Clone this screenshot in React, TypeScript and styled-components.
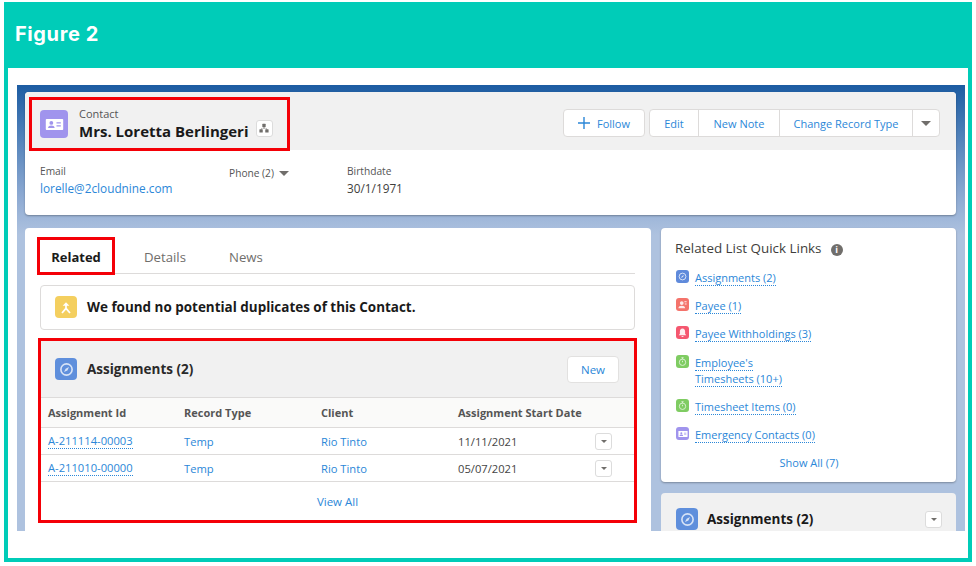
import React from "react";
import styled, { createGlobalStyle } from "styled-components";

const GlobalStyle = createGlobalStyle`
  html, body {
    margin: 0;
    padding: 0;
    background: #fff;
  }
  * {
    box-sizing: border-box;
  }
`;

const BLUE = "#2b87d8";
const RED = "#f40007";

const Page = styled.div`
  width: 976px;
  height: 566px;
  padding: 2px 4px 4px;
  background: #fff;
  font-family: "Open Sans", "Noto Sans", sans-serif;
  overflow: hidden;
`;

const Frame = styled.div`
  width: 968px;
  height: 560px;
  border: 4px solid #00ccb8;
  display: flex;
  flex-direction: column;
`;

const Banner = styled.div`
  height: 62px;
  flex: none;
  background: #00ccb8;
  color: #fff;
  font: 700 20px "Inter", sans-serif;
  letter-spacing: 0.6px;
  padding-left: 7px;
  display: flex;
  align-items: center;
  padding-bottom: 6px;
`;

const Screen = styled.div`
  margin: 17px 3px 0 9px;
  height: 446px;
  padding: 7px 9px 0 8px;
  background: linear-gradient(180deg, #1c5ca2 0, #4f80b9 50px, #8ca9d2 110px, #aec2df 150px);
  overflow: hidden;
`;

const RecordCard = styled.div`
  width: 931px;
  height: 123px;
  background: #fff;
  border-radius: 4px;
  box-shadow: 0 1px 2px rgba(0, 0, 0, 0.3);
`;

const RecordHead = styled.div`
  height: 58px;
  background: #f1f1f1;
  border-radius: 4px 4px 0 0;
  display: flex;
  justify-content: space-between;
  padding: 5px 16px 0 4px;
`;

const TitleHighlight = styled.div`
  width: 261px;
  height: 54px;
  border: 3px solid ${RED};
  padding-left: 8px;
  display: flex;
  align-items: center;
  gap: 11px;
`;

const IconTile = styled.span<{ $size: number; $color: string }>`
  width: ${(p) => p.$size}px;
  height: ${(p) => p.$size}px;
  flex: none;
  background: ${(p) => p.$color};
  border-radius: ${(p) => (p.$size > 16 ? 4 : 3)}px;
  display: inline-flex;
  align-items: center;
  justify-content: center;
`;

const TitleText = styled.div`
  display: flex;
  flex-direction: column;
  padding-bottom: 1px;
`;

const ObjectName = styled.span`
  font-size: 11px;
  line-height: 14px;
  color: #555;
`;

const NameRow = styled.div`
  display: flex;
  align-items: flex-start;
  gap: 7px;
`;

const RecordName = styled.span`
  font-size: 15px;
  line-height: 20px;
  font-weight: 700;
  color: #1a1a1a;
  white-space: nowrap;
`;

const HierarchyButton = styled.span`
  width: 17px;
  height: 17px;
  margin-top: -1px;
  background: #fff;
  border: 1px solid #dcdcdc;
  border-radius: 3px;
  display: inline-flex;
  align-items: center;
  justify-content: center;
`;

const Actions = styled.div`
  display: flex;
  gap: 4px;
  padding-top: 12px;
`;

const ButtonGroup = styled.div`
  display: flex;
  height: 28px;
  background: #fff;
  border: 1px solid #dddbda;
  border-radius: 4px;
`;

const ActionButton = styled.span<{ $width: number }>`
  width: ${(p) => p.$width}px;
  display: flex;
  align-items: center;
  justify-content: center;
  gap: 7px;
  font-size: 11px;
  color: ${BLUE};
  border-left: 1px solid #dddbda;
  &:first-child {
    border-left: 0;
  }
`;

const Caret = styled.span<{ $w?: number }>`
  display: inline-block;
  width: 0;
  height: 0;
  border-left: ${(p) => p.$w ?? 5}px solid transparent;
  border-right: ${(p) => p.$w ?? 5}px solid transparent;
  border-top: ${(p) => p.$w ?? 5}px solid #706e6b;
`;

const Fields = styled.div`
  display: flex;
  padding: 14px 0 0 15px;
`;

const Field = styled.div<{ $width: number }>`
  width: ${(p) => p.$width}px;
  display: flex;
  flex-direction: column;
  gap: 2px;
`;

const FieldLabel = styled.span`
  font-size: 10.2px;
  line-height: 14px;
  color: #555;
  display: flex;
  align-items: center;
  gap: 5px;
`;

const PhoneLabel = styled(FieldLabel)`
  margin-top: 2px;
`;

const FieldValue = styled.span`
  font-size: 11.8px;
  line-height: 16px;
  color: #3e3e3c;
`;

const FieldLink = styled(FieldValue)`
  color: ${BLUE};
`;

const Columns = styled.div`
  display: flex;
  gap: 10px;
  margin-top: 13px;
  align-items: flex-start;
`;

const MainCard = styled.div`
  width: 626px;
  height: 320px;
  flex: none;
  background: #fff;
  border-radius: 4px 4px 0 0;
  padding: 9px 14px 0 12px;
`;

const Tabs = styled.div`
  display: flex;
  align-items: center;
  height: 37px;
  margin-left: 3px;
  border-bottom: 1px solid #dddbda;
  margin-right: 2px;
  width: 595px;
`;

const ActiveTab = styled.span`
  width: 78px;
  height: 38px;
  margin-left: -3px;
  flex: none;
  border: 3px solid ${RED};
  font-size: 13px;
  font-weight: 700;
  color: #1a1a1a;
  display: flex;
  align-items: center;
  justify-content: center;
  margin-top: 1px;
  padding-top: 2px;
`;

const Tab = styled.span<{ $left: number }>`
  margin-left: ${(p) => p.$left}px;
  margin-top: 3px;
  font-size: 13.2px;
  color: #706e6b;
`;

const DuplicateBox = styled.div`
  width: 595px;
  height: 45px;
  margin: 11px 0 8px 3px;
  border: 1px solid #dddbda;
  border-radius: 4px;
  display: flex;
  align-items: center;
  gap: 10px;
  padding: 0 0 2px 14px;
  font-size: 13.45px;
  font-weight: 700;
  color: #1a1a1a;
`;

const RelatedHighlight = styled.div`
  width: 599px;
  height: 185px;
  margin-left: 1px;
  border: 3px solid ${RED};
  display: flex;
  flex-direction: column;
`;

const RelatedHead = styled.div`
  height: 57px;
  flex: none;
  background: #f1f1f1;
  display: flex;
  align-items: center;
  gap: 10px;
  padding: 0 15px 0 14px;
  border-bottom: 1px solid #dddbda;
`;

const RelatedTitle = styled.span`
  font-size: 13.5px;
  font-weight: 700;
  color: #2a2a2a;
  flex: 1;
`;

const NewButton = styled.span`
  width: 52px;
  height: 27px;
  background: #fff;
  border: 1px solid #e2e1e0;
  border-radius: 4px;
  font-size: 11.5px;
  color: ${BLUE};
  display: flex;
  align-items: center;
  justify-content: center;
`;

const TableRow = styled.div<{ $head?: boolean }>`
  height: ${(p) => (p.$head ? 30 : 27)}px;
  flex: none;
  display: grid;
  grid-template-columns: 136px 137px 137px 1fr 39px;
  align-items: center;
  padding-left: 7px;
  padding-top: ${(p) => (p.$head ? 0 : 1)}px;
  background: ${(p) => (p.$head ? "#fafaf9" : "#fff")};
  border-bottom: 1px solid #dddbda;
`;

const HeadCell = styled.span`
  font-size: 11px;
  font-weight: 700;
  color: #555;
  white-space: nowrap;
`;

const LinkCell = styled.span<{ $dotted?: boolean }>`
  font-size: 11.2px;
  color: ${BLUE};
  justify-self: start;
  ${(p) => (p.$dotted ? `border-bottom: 1px dotted ${BLUE}; line-height: 14px;` : "")}
`;

const DateCell = styled.span`
  font-size: 11.2px;
  color: #444;
`;

const MenuButton = styled.span`
  width: 17px;
  height: 17px;
  background: #fff;
  border: 1px solid #dcdcdc;
  border-radius: 3px;
  display: inline-flex;
  align-items: center;
  justify-content: center;
`;

const SideMenuButton = styled(MenuButton)`
  margin-top: 3px;
`;

const ViewAll = styled.div`
  text-align: center;
  font-size: 11.5px;
  color: ${BLUE};
  padding-top: 12px;
`;

const Side = styled.div`
  width: 295px;
  flex: none;
  display: flex;
  flex-direction: column;
  gap: 11px;
`;

const QuickLinks = styled.div`
  height: 254px;
  background: #fff;
  border-radius: 4px;
  box-shadow: 0 1px 2px rgba(0, 0, 0, 0.3);
  padding: 10px 14px 0 15px;
`;

const QuickTitle = styled.div`
  display: flex;
  align-items: center;
  gap: 9px;
  margin-left: -1px;
  font-size: 13.4px;
  line-height: 20px;
  color: #3e3e3c;
  margin-bottom: 12px;
`;

const InfoDot = styled.span`
  width: 12px;
  height: 12px;
  margin-top: 3px;
  border-radius: 50%;
  background: #706e6b;
  color: #fff;
  font-size: 9px;
  font-weight: 700;
  line-height: 12px;
  text-align: center;
`;

const QuickItem = styled.div<{ $gap: number }>`
  display: flex;
  gap: 6px;
  margin-bottom: ${(p) => p.$gap}px;
`;

const QuickLink = styled.span`
  font-size: 11px;
  line-height: 15px;
  color: ${BLUE};
  display: flex;
  flex-direction: column;
  align-items: flex-start;
`;

const Dotted = styled.span`
  border-bottom: 1px dotted ${BLUE};
`;

const ShowAll = styled.div`
  text-align: center;
  font-size: 11px;
  color: ${BLUE};
  margin-top: 0;
`;

const SideCard = styled.div`
  height: 60px;
  background: #f1f1f1;
  border-radius: 4px;
  padding: 15px 14px 0 15px;
  display: flex;
  align-items: flex-start;
  gap: 9px;
`;

const SideTitle = styled.span`
  flex: 1;
  font-size: 13.5px;
  line-height: 22px;
  font-weight: 700;
  color: #1a1a1a;
`;

const ContactGlyph = ({ size }: { size: number }) => (
  <svg width={size} height={size} viewBox="0 0 24 24" fill="#fff">
    <path d="M2 5h20a1 1 0 0 1 1 1v12a1 1 0 0 1-1 1H2a1 1 0 0 1-1-1V6a1 1 0 0 1 1-1z" />
    <circle cx="8" cy="10" r="2.4" fill="#a094ed" />
    <path d="M3.8 16.5c0-2.2 2-3.2 4.2-3.2s4.2 1 4.2 3.2z" fill="#a094ed" />
    <path d="M14.5 9h5.5v1.6h-5.5zM14.5 13h5.5v1.6h-5.5z" fill="#a094ed" />
  </svg>
);

const CompassGlyph = ({ size }: { size: number }) => (
  <svg width={size} height={size} viewBox="0 0 24 24" fill="none">
    <circle cx="12" cy="12" r="9" stroke="#fff" strokeWidth="2.6" opacity="0.75" />
    <path d="M16 8l-2.6 5.4L8 16l2.6-5.4z" fill="#fff" opacity="0.75" />
  </svg>
);

const PayeeGlyph = () => (
  <svg width="9" height="9" viewBox="0 0 24 24" fill="#fff" opacity="0.85">
    <circle cx="10" cy="8" r="5" />
    <path d="M1 22c0-5 4-7 9-7s9 2 9 7z" />
    <path d="M17 3h6v3h-6zM18 9h5v3h-5z" />
  </svg>
);

const BellGlyph = () => (
  <svg width="9" height="9" viewBox="0 0 24 24" fill="#fff" opacity="0.9">
    <path d="M12 1c-5 0-7 4-7 8v6l-3 4h20l-3-4V9c0-4-2-8-7-8z" />
    <path d="M9 21h6a3 3 0 0 1-6 0z" />
  </svg>
);

const TimerGlyph = () => (
  <svg width="9" height="9" viewBox="0 0 24 24" fill="none" stroke="#fff" strokeWidth="2.6" opacity="0.7">
    <circle cx="12" cy="14" r="8.5" />
    <path d="M9 2h6M12 2v4M12 10v4" />
  </svg>
);

const HierarchyGlyph = () => (
  <svg width="10" height="10" viewBox="0 0 24 24" fill="#706e6b">
    <rect x="8" y="2" width="8" height="8" rx="1" />
    <rect x="1" y="15" width="8" height="8" rx="1" />
    <rect x="15" y="15" width="8" height="8" rx="1" />
    <path d="M11 10h2v3h6v2h-2v-1H7v1H5v-2h6z" />
  </svg>
);

const DuplicateGlyph = () => (
  <svg width="16" height="16" viewBox="0 0 24 24" fill="none" stroke="#fff" strokeWidth="2.6">
    <path d="M7 10l5-5 5 5z" fill="#fff" stroke="none" />
    <path d="M12 8v7M12 14l-6 7M12 14l6 7" />
  </svg>
);

const PlusGlyph = () => (
  <svg width="12" height="12" viewBox="0 0 12 12" stroke={BLUE} strokeWidth="1.4">
    <path d="M6 0v12M0 6h12" />
  </svg>
);

const rows = [
  { id: "A-211114-00003", date: "11/11/2021" },
  { id: "A-211010-00000", date: "05/07/2021" },
];

const quickLinks = [
  { lines: ["Assignments (2)"], color: "#5f8adb", icon: <CompassGlyph size={9} />, gap: 12 },
  { lines: ["Payee (1)"], color: "#f4736b", icon: <PayeeGlyph />, gap: 12 },
  { lines: ["Payee Withholdings (3)"], color: "#f5576f", icon: <BellGlyph />, gap: 13 },
  { lines: ["Employee's", "Timesheets (10+)"], color: "#7fcc62", icon: <TimerGlyph />, gap: 12 },
  { lines: ["Timesheet Items (0)"], color: "#7fcc62", icon: <TimerGlyph />, gap: 12 },
  { lines: ["Emergency Contacts (0)"], color: "#a094ed", icon: <ContactGlyph size={10} />, gap: 12 },
];

export default function App() {
  return (
    <Page>
      <GlobalStyle />
      <Frame>
        <Banner>Figure 2</Banner>
        <Screen>
          <RecordCard>
            <RecordHead>
              <TitleHighlight>
                <IconTile $size={28} $color="#a094ed">
                  <ContactGlyph size={19} />
                </IconTile>
                <TitleText>
                  <ObjectName>Contact</ObjectName>
                  <NameRow>
                    <RecordName>Mrs. Loretta Berlingeri</RecordName>
                    <HierarchyButton>
                      <HierarchyGlyph />
                    </HierarchyButton>
                  </NameRow>
                </TitleText>
              </TitleHighlight>
              <Actions>
                <ButtonGroup>
                  <ActionButton $width={80}>
                    <PlusGlyph />
                    Follow
                  </ActionButton>
                </ButtonGroup>
                <ButtonGroup>
                  <ActionButton $width={48}>Edit</ActionButton>
                  <ActionButton $width={81}>New Note</ActionButton>
                  <ActionButton $width={133}>Change Record Type</ActionButton>
                  <ActionButton $width={27}>
                    <Caret />
                  </ActionButton>
                </ButtonGroup>
              </Actions>
            </RecordHead>
            <Fields>
              <Field $width={189}>
                <FieldLabel>Email</FieldLabel>
                <FieldLink>lorelle@2cloudnine.com</FieldLink>
              </Field>
              <Field $width={118}>
                <PhoneLabel>
                  Phone (2) <Caret />
                </PhoneLabel>
              </Field>
              <Field $width={150}>
                <FieldLabel>Birthdate</FieldLabel>
                <FieldValue>30/1/1971</FieldValue>
              </Field>
            </Fields>
          </RecordCard>
          <Columns>
            <MainCard>
              <Tabs>
                <ActiveTab>Related</ActiveTab>
                <Tab $left={29}>Details</Tab>
                <Tab $left={43}>News</Tab>
              </Tabs>
              <DuplicateBox>
                <IconTile $size={22} $color="#f4cf5f">
                  <DuplicateGlyph />
                </IconTile>
                We found no potential duplicates of this Contact.
              </DuplicateBox>
              <RelatedHighlight>
                <RelatedHead>
                  <IconTile $size={22} $color="#5f8fdc">
                    <CompassGlyph size={15} />
                  </IconTile>
                  <RelatedTitle>Assignments (2)</RelatedTitle>
                  <NewButton>New</NewButton>
                </RelatedHead>
                <TableRow $head>
                  <HeadCell>Assignment Id</HeadCell>
                  <HeadCell>Record Type</HeadCell>
                  <HeadCell>Client</HeadCell>
                  <HeadCell>Assignment Start Date</HeadCell>
                </TableRow>
                {rows.map((r) => (
                  <TableRow key={r.id}>
                    <LinkCell $dotted>{r.id}</LinkCell>
                    <LinkCell>Temp</LinkCell>
                    <LinkCell>Rio Tinto</LinkCell>
                    <DateCell>{r.date}</DateCell>
                    <MenuButton>
                      <Caret $w={3.5} />
                    </MenuButton>
                  </TableRow>
                ))}
                <ViewAll>View All</ViewAll>
              </RelatedHighlight>
            </MainCard>
            <Side>
              <QuickLinks>
                <QuickTitle>
                  Related List Quick Links
                  <InfoDot>i</InfoDot>
                </QuickTitle>
                {quickLinks.map((q) => (
                  <QuickItem key={q.lines[0]} $gap={q.gap}>
                    <IconTile $size={13} $color={q.color}>
                      {q.icon}
                    </IconTile>
                    <QuickLink>
                      {q.lines.map((l) => (
                        <Dotted key={l}>{l}</Dotted>
                      ))}
                    </QuickLink>
                  </QuickItem>
                ))}
                <ShowAll>Show All (7)</ShowAll>
              </QuickLinks>
              <SideCard>
                <IconTile $size={22} $color="#5f8fdc">
                  <CompassGlyph size={15} />
                </IconTile>
                <SideTitle>Assignments (2)</SideTitle>
                <SideMenuButton>
                  <Caret $w={3.5} />
                </SideMenuButton>
              </SideCard>
            </Side>
          </Columns>
        </Screen>
      </Frame>
    </Page>
  );
}
